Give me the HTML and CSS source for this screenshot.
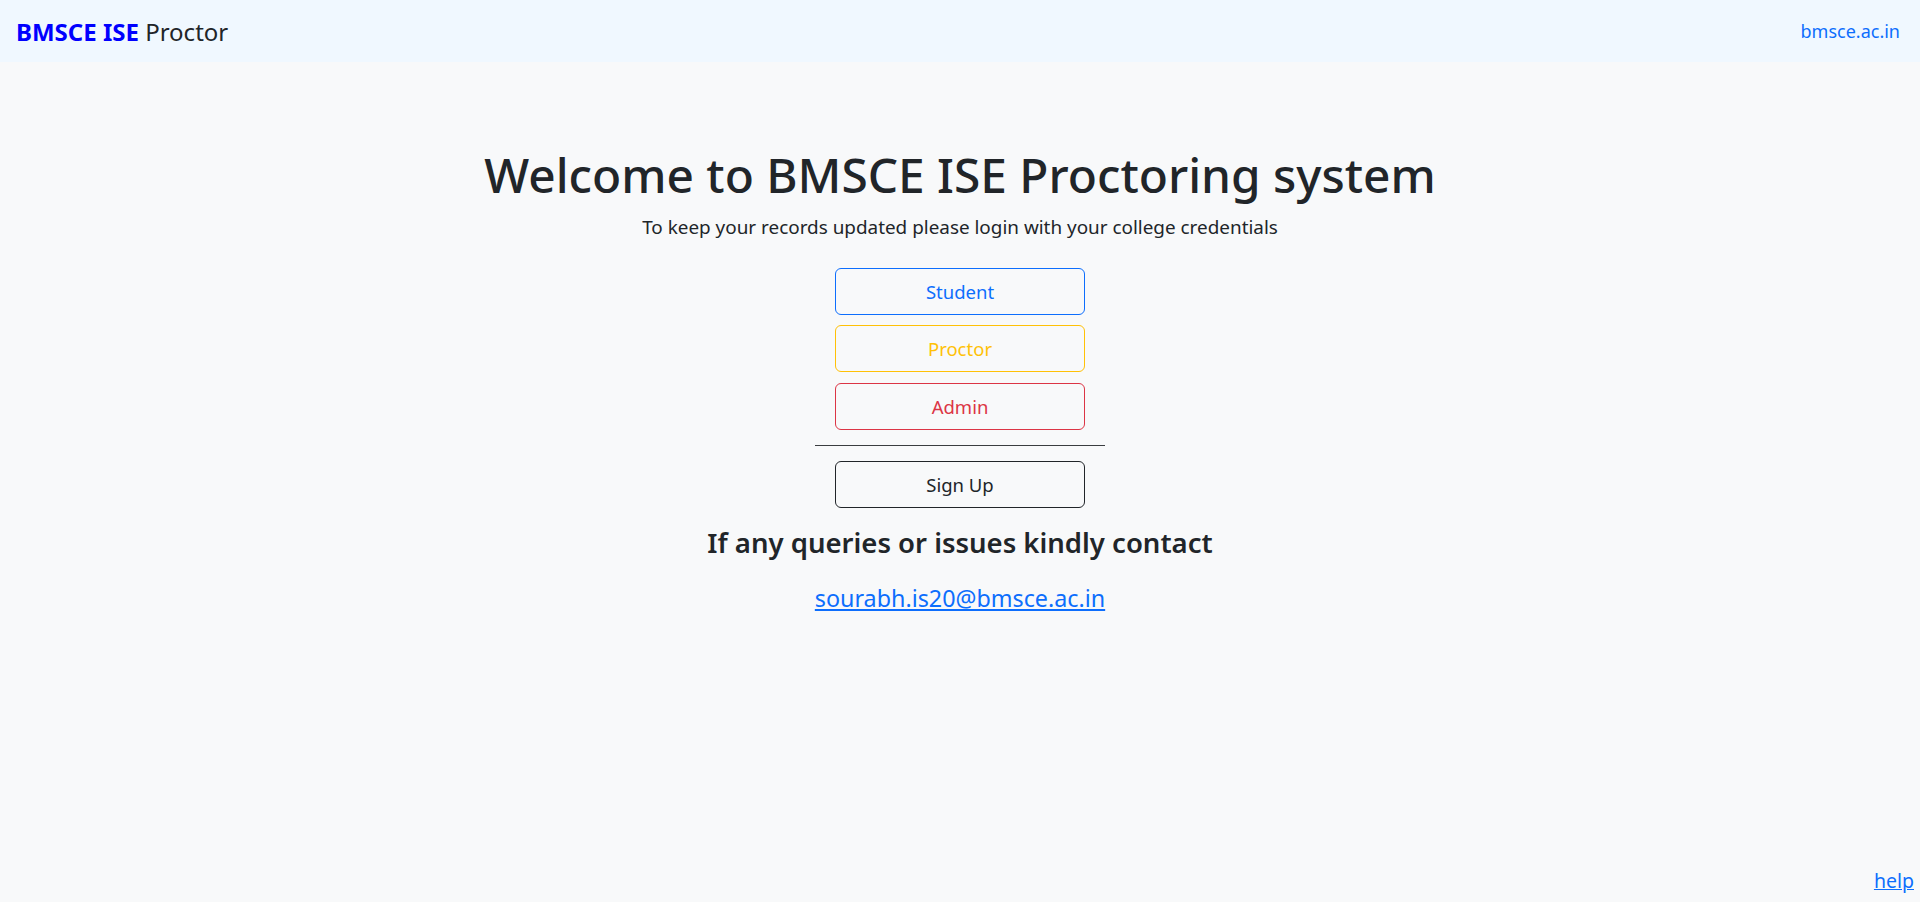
FILE: index.html
```html
<!DOCTYPE html>
<html lang="en">
<head>
<meta charset="utf-8">
<title>BMSCE ISE Proctor</title>
<link rel="stylesheet" href="styles.css">
</head>
<body>
<nav class="navbar">
  <a class="brand" href="#"><span class="brand-accent">BMSCE ISE</span> Proctor</a>
  <a class="site-link" href="#">bmsce.ac.in</a>
</nav>
<main class="landing">
  <h1 class="title">Welcome to BMSCE ISE Proctoring system</h1>
  <p class="lead">To keep your records updated please login with your college credentials</p>
  <div class="actions">
    <a class="btn btn-student" href="#">Student</a>
    <a class="btn btn-proctor" href="#">Proctor</a>
    <a class="btn btn-admin" href="#">Admin</a>
  </div>
  <hr class="divider">
  <a class="btn btn-signup" href="#">Sign Up</a>
  <h3 class="contact-title">If any queries or issues kindly contact</h3>
  <a class="contact-mail" href="#">sourabh.is20@bmsce.ac.in</a>
</main>
<footer class="footer">
  <a class="help" href="#">help</a>
</footer>
</body>
</html>
```

FILE: styles.css
```css
* { box-sizing: border-box; }
html, body { margin: 0; padding: 0; }
body {
  min-height: 902px;
  display: flex;
  flex-direction: column;
  background: #f8f9fa;
  color: #212529;
  font-family: "Noto Sans", "Open Sans", sans-serif;
}
a { text-decoration: none; }

.navbar {
  height: 62px;
  display: flex;
  align-items: center;
  justify-content: space-between;
  padding: 0 20px 0 16px;
  background: #f0f8ff;
}
.brand {
  font-size: 24px;
  color: #212529;
}
.brand-accent { color: #0000ff; font-weight: 700; }
.site-link { color: #0d6efd; font-size: 18px; }

.landing {
  flex: 1;
  display: flex;
  flex-direction: column;
  align-items: center;
  padding-top: 84px;
}
.title {
  margin: 0;
  font-size: 47.8px;
  font-weight: 500;
  line-height: 1.2;
}
.lead {
  margin: 10px 0 26px;
  font-size: 18.9px;
  line-height: 1.5;
}
.actions {
  display: flex;
  flex-direction: column;
  gap: 10.5px;
}
.btn {
  display: flex;
  align-items: center;
  justify-content: center;
  width: 250px;
  height: 47px;
  border: 1px solid;
  border-radius: 6px;
  font-size: 18.5px;
  background: transparent;
}
.btn-student { color: #0d6efd; border-color: #0d6efd; }
.btn-proctor { color: #ffc107; border-color: #ffc107; }
.btn-admin { color: #dc3545; border-color: #dc3545; }
.btn-signup { color: #212529; border-color: #212529; }

.divider {
  width: 290px;
  margin: 15px 0;
  border: 0;
  border-top: 1px solid #3a3d40;
}
.contact-title {
  margin: 18px 0 0;
  font-size: 27.5px;
  font-weight: 600;
  line-height: 1.2;
}
.contact-mail {
  margin-top: 22.5px;
  font-size: 23.3px;
  line-height: 1.5;
  color: #0d6efd;
  text-decoration: underline;
}

.footer {
  display: flex;
  justify-content: flex-end;
  padding: 0 6px 7px 0;
}
.help {
  color: #0d6efd;
  font-size: 19.5px;
  line-height: 1.5;
  text-decoration: underline;
}
```
